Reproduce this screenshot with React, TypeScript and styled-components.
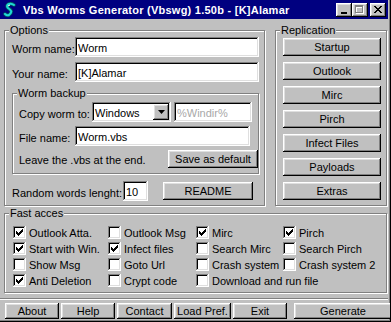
import React from "react";
import styled, { createGlobalStyle } from "styled-components";

const Global = createGlobalStyle`
  html, body { margin: 0; padding: 0; background: #c0c0c0; }
  body { font-family: "Liberation Sans", Arial, sans-serif; font-size: 11px; color: #000; }
  * { box-sizing: border-box; }
`;

const raised = `
  box-shadow: inset -1px -1px #000, inset 1px 1px #fff, inset -2px -2px #808080, inset 2px 2px #dfdfdf;
`;
const sunken = `
  box-shadow: inset -1px -1px #fff, inset 1px 1px #808080, inset -2px -2px #dfdfdf, inset 2px 2px #000;
`;

const Window = styled.div`
  width: 391px;
  height: 322px;
  background: #c0c0c0;
  border-right: 1px solid #000;
  border-bottom: 1px solid #000;
  box-shadow: inset -1px -1px #808080;
  padding: 0 2px 2px 0;
  display: flex;
  flex-direction: column;
  overflow: hidden;
`;

const TitleBar = styled.div`
  height: 19px;
  flex: none;
  background: #000080;
  color: #fff;
  display: flex;
  align-items: center;
  padding: 0 2px 0 2px;
  font-weight: bold;
  font-size: 11px;
  white-space: nowrap;
`;

const TitleText = styled.span`
  margin-left: 5px;
  letter-spacing: 0.25px;
`;

const CaptionButtons = styled.div`
  margin-left: auto;
  display: flex;
  align-items: center;
`;

const CaptionButton = styled.div<{ $gap?: number }>`
  width: 16px;
  height: 14px;
  background: #c0c0c0;
  margin-left: ${(p) => p.$gap ?? 0}px;
  display: flex;
  align-items: center;
  justify-content: center;
  ${raised}
`;

const Body = styled.div`
  flex: 1;
  display: flex;
  flex-direction: column;
  padding: 5px 0 0 4px;
`;

const TopRow = styled.div`
  display: flex;
  gap: 10px;
`;

const Group = styled.fieldset<{ $w: number; $h: number }>`
  margin: 0;
  padding: 0;
  min-width: 0;
  width: ${(p) => p.$w}px;
  height: ${(p) => p.$h}px;
  border: 1px solid #808080;
  box-shadow: inset 1px 1px #fff, 1px 1px #fff;
  flex: none;
`;

const Legend = styled.legend`
  padding: 0 1px;
  margin-left: 4px;
  line-height: 13px;
  font-size: 11px;
  background: #c0c0c0;
`;

const Stack = styled.div<{ $pl: number; $pt?: number; $gap?: number }>`
  display: flex;
  flex-direction: column;
  padding-left: ${(p) => p.$pl}px;
  padding-top: ${(p) => p.$pt ?? 0}px;
  gap: ${(p) => p.$gap ?? 0}px;
`;

const Row = styled.div<{ $mt?: number; $h?: number }>`
  display: flex;
  align-items: center;
  height: ${(p) => p.$h ?? 20}px;
  margin-top: ${(p) => p.$mt ?? 0}px;
`;

const Label = styled.span<{ $w?: number }>`
  width: ${(p) => (p.$w ? `${p.$w}px` : "auto")};
  flex: none;
  padding-top: 4px;
  white-space: nowrap;
`;

const TextBox = styled.input<{ $w: number; $disabled?: boolean }>`
  width: ${(p) => p.$w}px;
  height: 20px;
  flex: none;
  border: none;
  outline: none;
  margin: 0;
  padding: 2px 3px 0 3px;
  font: inherit;
  font-size: 11px;
  background: #fff;
  color: ${(p) => (p.$disabled ? "#a8a8a8" : "#000")};
  ${sunken}
`;

const Combo = styled.div<{ $w: number }>`
  width: ${(p) => p.$w}px;
  height: 20px;
  flex: none;
  background: #fff;
  display: flex;
  align-items: center;
  padding: 2px 2px 2px 3px;
  ${sunken}
`;

const ComboText = styled.span`
  flex: 1;
  padding-top: 1px;
`;

const ComboArrow = styled.div`
  width: 16px;
  height: 16px;
  background: #c0c0c0;
  display: flex;
  align-items: center;
  justify-content: center;
  ${raised}
`;

const Button = styled.div<{ $w: number; $h?: number; $ml?: number }>`
  width: ${(p) => p.$w}px;
  height: ${(p) => p.$h ?? 18}px;
  margin-left: ${(p) => p.$ml ?? 0}px;
  flex: none;
  background: #c0c0c0;
  display: flex;
  align-items: center;
  justify-content: center;
  white-space: nowrap;
  ${raised}
`;

const Note = styled.span`
  flex: 1;
  padding-top: 2px;
  white-space: nowrap;
`;

const CheckGrid = styled.div`
  display: grid;
  grid-template-columns: 95px 88px 87px 1fr;
  grid-auto-rows: 16px;
  padding: 4px 0 0 8px;
`;

const CheckItem = styled.label`
  display: flex;
  align-items: center;
  gap: 3px;
  white-space: nowrap;
`;

const Box = styled.span`
  width: 13px;
  height: 13px;
  flex: none;
  background: #fff;
  display: flex;
  align-items: center;
  justify-content: center;
  ${sunken}
`;

const CheckText = styled.span`
  padding-top: 1px;
`;

const BottomBar = styled.div`
  margin-top: 5px;
  margin-left: -4px;
  flex: 1;
  border-top: 1px solid #808080;
  box-shadow: inset 0 1px #fff;
  display: flex;
  padding: 4px 0 0 5px;
  gap: 2px;
`;

const WormIcon = () => (
  <svg width="16" height="16" viewBox="0 0 16 16">
    <path d="M12 3 C8 0 3 3 6 6 C9 8 11 10 7 13 C5 14 4 13 3 12" fill="none" stroke="#006060" strokeWidth="3.4" strokeLinecap="round" />
    <path d="M12 3 C8 0 3 3 6 6 C9 8 11 10 7 13 C5 14 4 13 3 12" fill="none" stroke="#20d8d8" strokeWidth="2" strokeLinecap="round" />
    <path d="M6 4 L8 3" stroke="#fff" strokeWidth="1" />
  </svg>
);

const Check = () => (
  <svg width="7" height="7" viewBox="0 0 7 7" shapeRendering="crispEdges">
    <path d="M6 0h1v1h-1zM5 1h2v1h-2zM0 2h1v1h-1zM4 2h3v1h-3zM0 3h2v1h-2zM3 3h3v1h-3zM0 4h5v1h-5zM1 5h3v1h-3zM2 6h1v1h-1z" fill="#000" />
  </svg>
);

type CB = { label: string; checked?: boolean };
const checks: CB[] = [
  { label: "Outlook Atta.", checked: true },
  { label: "Outlook Msg" },
  { label: "Mirc", checked: true },
  { label: "Pirch", checked: true },
  { label: "Start with Win.", checked: true },
  { label: "Infect files", checked: true },
  { label: "Search Mirc" },
  { label: "Search Pirch" },
  { label: "Show Msg" },
  { label: "Goto Url" },
  { label: "Crash system" },
  { label: "Crash system 2" },
  { label: "Anti Deletion", checked: true },
  { label: "Crypt code" },
  { label: "Download and run file" },
];

const replication = ["Startup", "Outlook", "Mirc", "Pirch", "Infect Files", "Payloads", "Extras"];

const bottom: { label: string; w: number; ml?: number }[] = [
  { label: "About", w: 54 },
  { label: "Help", w: 54 },
  { label: "Contact", w: 55 },
  { label: "Load Pref.", w: 57 },
  { label: "Exit", w: 54 },
  { label: "Generate", w: 98, ml: 5 },
];

export default function App() {
  return (
    <>
      <Global />
      <Window>
        <TitleBar>
          <WormIcon />
          <TitleText>Vbs Worms Generator (Vbswg) 1.50b - [K]Alamar</TitleText>
          <CaptionButtons>
            <CaptionButton>
              <svg width="8" height="8" viewBox="0 0 8 8" shapeRendering="crispEdges">
                <rect x="1" y="6" width="6" height="2" fill="#000" />
              </svg>
            </CaptionButton>
            <CaptionButton>
              <svg width="10" height="9" viewBox="0 0 10 9" shapeRendering="crispEdges">
                <path d="M1 1h8v8h-8z M2 3v5h6v-5z" fill="#fff" fillRule="evenodd" />
                <path d="M0 0h8v8h-8z M1 2v5h6v-5z" fill="#808080" fillRule="evenodd" />
              </svg>
            </CaptionButton>
            <CaptionButton $gap={2}>
              <svg width="8" height="7" viewBox="0 0 8 7" shapeRendering="crispEdges">
                <path d="M0 0h2v1h-2zM6 0h2v1h-2zM1 1h2v1h-2zM5 1h2v1h-2zM2 2h4v1h-4zM3 3h2v1h-2zM2 4h4v1h-4zM1 5h2v1h-2zM5 5h2v1h-2zM0 6h2v1h-2zM6 6h2v1h-2z" fill="#000" />
              </svg>
            </CaptionButton>
          </CaptionButtons>
        </TitleBar>
        <Body>
          <TopRow>
            <Group $w={261} $h={182}>
              <Legend>Options</Legend>
              <Stack $pl={7}>
                <Row>
                  <Label $w={63}>Worm name:</Label>
                  <TextBox $w={184} readOnly defaultValue="Worm" />
                </Row>
                <Row $mt={5}>
                  <Label $w={63}>Your name:</Label>
                  <TextBox $w={184} readOnly defaultValue="[K]Alamar" />
                </Row>
                <Group $w={247} $h={87} style={{ marginTop: 5 }}>
                  <Legend>Worm backup</Legend>
                  <Stack $pl={6} $pt={2}>
                    <Row>
                      <Label $w={73}>Copy worm to:</Label>
                      <Combo $w={79}>
                        <ComboText>Windows</ComboText>
                        <ComboArrow>
                          <svg width="7" height="4" viewBox="0 0 7 4">
                            <path d="M0 0h7L3.5 4z" fill="#000" />
                          </svg>
                        </ComboArrow>
                      </Combo>
                      <TextBox $w={78} $disabled readOnly defaultValue="%Windir%" style={{ marginLeft: 3 }} />
                    </Row>
                    <Row $mt={4}>
                      <Label $w={56}>File name:</Label>
                      <TextBox $w={175} readOnly defaultValue="Worm.vbs" />
                    </Row>
                    <Row $mt={3} $h={19}>
                      <Note>Leave the .vbs at the end.</Note>
                      <Button $w={90}>Save as default</Button>
                    </Row>
                  </Stack>
                </Group>
                <Row $mt={7}>
                  <Label $w={111}>Random words lenght:</Label>
                  <TextBox $w={25} readOnly defaultValue="10" />
                  <Button $w={90} $ml={15}>README</Button>
                </Row>
              </Stack>
            </Group>
            <Group $w={112} $h={182}>
              <Legend>Replication</Legend>
              <Stack $pl={7} $pt={1} $gap={6}>
                {replication.map((r) => (
                  <Button key={r} $w={98}>
                    {r}
                  </Button>
                ))}
              </Stack>
            </Group>
          </TopRow>
          <Group $w={383} $h={86} style={{ marginTop: 1 }}>
            <Legend>Fast acces</Legend>
            <CheckGrid>
              {checks.map((c) => (
                <CheckItem key={c.label}>
                  <Box>{c.checked && <Check />}</Box>
                  <CheckText>{c.label}</CheckText>
                </CheckItem>
              ))}
            </CheckGrid>
          </Group>
          <BottomBar>
            {bottom.map((b) => (
              <Button key={b.label} $w={b.w} $h={16} $ml={b.ml}>
                {b.label}
              </Button>
            ))}
          </BottomBar>
        </Body>
      </Window>
    </>
  );
}
